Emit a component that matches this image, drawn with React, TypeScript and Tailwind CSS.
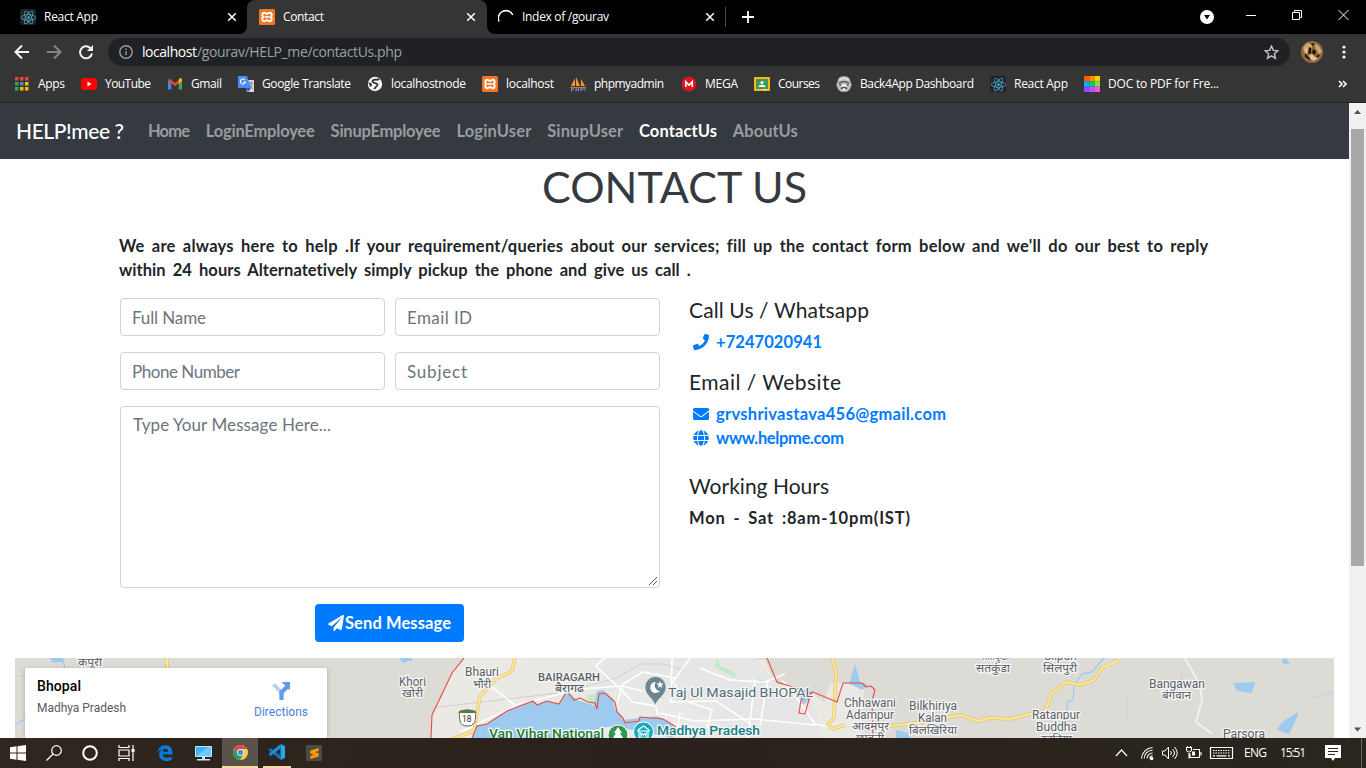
import React, { useLayoutEffect, useRef, useState } from "react";
import { FaEnvelope, FaGlobe, FaPaperPlane, FaPhone, FaReact } from "react-icons/fa";
import { SiSublimetext } from "react-icons/si";

type LabelProps = { w: number; children: string; className?: string };

/* One line of text whose tracking is computed so that it spans exactly `w` pixels. */
function Label({ w, children, className = "" }: LabelProps) {
  const ref = useRef<HTMLSpanElement>(null);
  const [tracking, setTracking] = useState(0);
  useLayoutEffect(() => {
    const el = ref.current;
    if (el) setTracking((w - el.getBoundingClientRect().width) / Math.max(1, children.length - 1));
  }, [w, children]);
  return (
    <span className={`block shrink-0 whitespace-pre ${className}`} style={{ width: w }}>
      <span ref={ref} style={{ letterSpacing: tracking }}>
        {children}
      </span>
    </span>
  );
}

const ReactIcon = () => (
  <span className="flex size-4 shrink-0 items-center justify-center rounded-[2px] bg-[#20232a]">
    <FaReact className="size-[15px] text-[#4fb3cb]" />
  </span>
);

const XamppIcon = () => (
  <svg viewBox="0 0 16 16" className="size-4 shrink-0">
    <rect width="16" height="16" rx="1.500" fill="#f37623" />
    <path
      d="M5.200 3.800C3 3.800 2.600 6.600 4.400 8 2.600 9.400 3 12.200 5.200 12.200c1.600 0 1.900-1.200 2.800-1.200s1.200 1.200 2.800 1.200c2.200 0 2.600-2.800.8-4.200 1.800-1.400 1.400-4.200-.8-4.200C9.200 3.800 8.900 5 8 5S6.800 3.800 5.200 3.800Z"
      fill="none"
      stroke="#fff"
      strokeWidth="2"
    />
    <path d="M6 8h4" stroke="#fff" strokeWidth="1.600" />
  </svg>
);

const CloseIcon = () => (
  <svg viewBox="0 0 10 10" className="size-[10px] shrink-0" stroke="#fff" strokeWidth="1.500">
    <path d="M1.200 1.200l7.600 7.600M8.800 1.200L1.200 8.800" />
  </svg>
);

function TabStrip() {
  return (
    <div className="flex h-[34px] bg-black">
      <div className="flex w-[247px] items-center pl-5">
        <ReactIcon />
        <Label w={54} className="ml-2">React App</Label>
        <span className="ml-[129px]"><CloseIcon /></span>
      </div>
      <div className="relative flex w-[240px] items-center rounded-t-lg bg-[#353535] pl-3">
        <svg viewBox="0 0 8 8" className="absolute bottom-0 -left-2 size-2"><path d="M8 0v8H0a8 8 0 0 0 8-8" fill="#353535" /></svg>
        <svg viewBox="0 0 8 8" className="absolute -right-2 bottom-0 size-2"><path d="M0 0v8h8a8 8 0 0 1-8-8" fill="#353535" /></svg>
        <XamppIcon />
        <Label w={41} className="ml-2">Contact</Label>
        <span className="ml-[142px]"><CloseIcon /></span>
      </div>
      <div className="flex w-[238px] items-center pl-[11px]">
        <svg viewBox="0 0 16 16" className="size-4 shrink-0" fill="none" stroke="#fff" strokeWidth="1.600">
          <path d="M1 12.500A7.200 7.200 0 0 1 14.800 6" />
        </svg>
        <Label w={87} className="ml-2">Index of /gourav</Label>
        <span className="ml-[96px]"><CloseIcon /></span>
      </div>
      <div className="mt-[7px] h-5 w-px bg-[#4d4d4d]" />
      <div className="flex flex-1 items-center pl-4">
        <svg viewBox="0 0 12 12" className="size-3" stroke="#fff" strokeWidth="1.800"><path d="M6 0v12M0 6h12" /></svg>
        <div className="flex-1" />
        <svg viewBox="0 0 14 14" className="size-[14px]"><circle cx="7" cy="7" r="7" fill="#fff" /><path d="M4 5h6L7 9.500z" fill="#000" /></svg>
        <svg viewBox="0 0 103 12" className="mr-[17px] mb-[5px] ml-[32px] h-3 w-[103px]" fill="none" stroke="#fff">
          <path d="M0 6.500h10M46.500 3.500h7v7h-7zM48.500 3.500v-2h7v7h-2M92.500 1l10 10M102.500 1l-10 10" />
        </svg>
      </div>
    </div>
  );
}

function Toolbar() {
  return (
    <div className="flex h-9 items-center bg-[#353535]">
      <svg viewBox="0 0 80 16" className="ml-[14px] h-4 w-20" fill="none" strokeWidth="2">
        <path d="M15 8H2M8 1.500L1.500 8 8 14.500" stroke="#f1f3f4" />
        <path d="M33 8h13M40 1.500L46.500 8 40 14.500" stroke="#858585" />
        <path d="M76.500 4.200A6 6 0 1 0 78 9.500" stroke="#f1f3f4" />
        <path d="M79 1v6h-6z" fill="#f1f3f4" />
      </svg>
      <div className="ml-[14px] flex h-7 w-[1182px] items-center rounded-full bg-[#202124] px-[11px]">
        <svg viewBox="0 0 14 14" className="size-[14px]" fill="none" stroke="#9aa0a6" strokeWidth="1.400"><circle cx="7" cy="7" r="6.200" /><path d="M7 6.200v4M7 3.500v1.400" /></svg>
        <Label w={55} className="ml-[9px] text-[14px] text-white">localhost</Label>
        <Label w={205} className="text-[14px] text-[#9aa0a6]">/gourav/HELP_me/contactUs.php</Label>
        <div className="flex-1" />
        <svg viewBox="0 0 14 14" className="size-[15px]" fill="none" stroke="#c4c7ca" strokeWidth="1.300"><path d="M7 1l1.700 4 4.300.4-3.300 2.800 1 4.300L7 10.200l-3.700 2.300 1-4.300L1 5.400 5.300 5z" /></svg>
      </div>
      <svg viewBox="0 0 22 22" className="ml-[11px] size-[22px]">
        <circle cx="11" cy="11" r="11" fill="#8f6a40" />
        <path d="M2 7l4-5 4 1 1 3-3 4-4 3zM13 2l5 3 3 6-3 2-3-5z" fill="#cfa871" />
        <path d="M8 6l2 1v6l-3-1zM12 8l3 2-1 4-3-2zM4 12l3 4 5 1-3 2-5-3zM10 2l4 1-2 2zM15 15l4-2-2 4z" fill="#20150c" />
        <path d="M8 14l3-1 3 3 3 1-4 3-4-2zM4 8l2-1 1 4-2 2z" fill="#e3c08d" />
      </svg>
      <svg viewBox="0 0 4 14" className="ml-[19px] h-[14px] w-1" fill="#f1f3f4"><circle cx="2" cy="2" r="1.600" /><circle cx="2" cy="7" r="1.600" /><circle cx="2" cy="12" r="1.600" /></svg>
    </div>
  );
}

const grid = ["#ea4335", "#ea4335", "#ea4335", "#34a853", "#4285f4", "#fbbc05", "#34a853", "#fbbc05", "#fbbc05"];
const rainbow = ["#ff5a00", "#ff8f00", "#ffd000", "#00b3ff", "#00d062", "#7ee04a", "#8a4dff", "#c44dff", "#ff4de8"];

const bookmarkIcons: Record<string, React.ReactNode> = {
  Apps: <>{grid.map((c, i) => <rect key={i} x={1 + (i % 3) * 5} y={1 + Math.floor(i / 3) * 5} width="3.500" height="3.500" fill={c} />)}</>,
  YouTube: <><rect y="2" width="16" height="12" rx="3" fill="#f00" /><path d="M6.500 5.500v5L10.500 8z" fill="#fff" /></>,
  Gmail: <><path d="M1 4v9.500h3.300V7z" fill="#4285f4" /><path d="M15 4v9.500h-3.300V7z" fill="#34a853" /><path d="M1 4.500L2.500 2.500 8 7l5.500-4.500L15 4.500 8 10.200z" fill="#ea4335" /><path d="M11.700 4v3.500L15 4.900V3.600a1.600 1.600 0 0 0-2.500-1.200z" fill="#fbbc04" /></>,
  "Google Translate": <><path d="M7 4h9v12H9z" fill="#d5d7da" /><path d="M0 0h9l4 12H1a1 1 0 0 1-1-1z" fill="#4b8bf5" /><path d="M8 12h5l-3 4z" fill="#2a56c6" /><path d="M7 4a2.500 2.500 0 1 0 .4 2H5.500" fill="none" stroke="#fff" strokeWidth="1.100" /><path d="M10.500 7h4M12.600 6v1M11.500 9l3 4M14.300 7c-.3 2-1.200 3-2.300 4" fill="none" stroke="#74787c" strokeWidth=".9" /></>,
  localhostnode: <><circle cx="8" cy="8" r="7.200" fill="#f4f4f4" /><path d="M11 4C8 3 5 4 5.500 5.800c.5 1.700 5.300 1 5 3.200-.1 1.500-2.500 1.800-3.300 4.300" fill="none" stroke="#303030" strokeWidth="1.700" /><path d="M1.500 6l3 1.500.5 2-2 1.500zM10 1.500l3 2-2 1z" fill="#303030" /></>,
  phpmyadmin: <><path d="M1 10L5 2v8zM6 10V1l4 9zM11 10V3l4 7z" fill="#f29a2e" /><path d="M0 11.500h16" stroke="#c9772a" /><path d="M1.500 15.500v-4h2v2h-2M6 11.500v4M6 13.500h2.500v-2m0 4v-4M11 15.500v-4h2v2h-2M15 12v3" stroke="#8588b5" fill="none" /></>,
  MEGA: <><circle cx="8" cy="8" r="7.300" fill="#e1141e" /><path d="M4.800 11V5.800L8 9l3.200-3.200V11" fill="none" stroke="#fff" strokeWidth="1.700" /></>,
  Courses: <><rect y="1" width="16" height="14" rx="1" fill="#f5b912" /><rect x="2" y="3" width="12" height="10" fill="#3f9a5b" /><circle cx="8" cy="6.500" r="1.600" fill="#fff" /><path d="M4.500 11c0-3 7-3 7 0z" fill="#fff" /><path d="M9 13h4v1H9z" fill="#eee" /></>,
  "Back4App Dashboard": <><path d="M8 .3c4 0 6 2 6.300 4.700L15.700 9l-2 4.500-2.700 2.200H5l-2.700-2.200L.3 9l1.400-4C2 2.300 4 .3 8 .3z" fill="#bdbdbd" /><path d="M4 4c2.500-2 5.500-2 8 0" fill="none" stroke="#eee" strokeWidth="1.200" /><path d="M3 7.500c2.500-2.500 7.500-2.500 10 0" fill="none" stroke="#4a4a4a" strokeWidth="1.300" /><path d="M3.500 9.500l2-1M12.500 9.500l-2-1M5 13c1.500-2.500 4.500-2.500 6 0" fill="none" stroke="#4a4a4a" strokeWidth="1.300" /><path d="M6 8.500h4l1 2H5zM6.500 13h3L8 15z" fill="#fff" /></>,
  "DOC to PDF for Fre...": <>{rainbow.map((c, i) => <rect key={i} x={(i % 3) * 5.34} y={Math.floor(i / 3) * 5.34} width="5.400" height="5.400" fill={c} />)}</>,
};

const bookmarks = [
  { name: "Apps", text: 27, cell: "w-[67px]" },
  { name: "YouTube", text: 46, cell: "w-[86px]" },
  { name: "Gmail", text: 31, cell: "w-[71px]" },
  { name: "Google Translate", text: 89, cell: "w-[129px]" },
  { name: "localhostnode", text: 75, cell: "w-[115px]" },
  { name: "localhost", text: 48, cell: "w-[88px]" },
  { name: "phpmyadmin", text: 70, cell: "w-[111px]" },
  { name: "MEGA", text: 33, cell: "w-[73px]" },
  { name: "Courses", text: 42, cell: "w-[82px]" },
  { name: "Back4App Dashboard", text: 114, cell: "w-[154px]" },
  { name: "React App", text: 54, cell: "w-[94px]" },
  { name: "DOC to PDF for Fre...", text: 111, cell: "w-[140px]" },
];

function Bookmarks() {
  return (
    <div className="flex h-[33px] items-center border-b border-[#202124] bg-[#353535] pb-1 pl-[14px]">
      {bookmarks.map((b) => (
        <div key={b.name} className={`flex shrink-0 items-center gap-2 ${b.cell}`}>
          {b.name === "React App" ? <ReactIcon /> : b.name === "localhost" ? <XamppIcon /> : (
            <svg viewBox="0 0 16 16" className="size-4 shrink-0">{bookmarkIcons[b.name]}</svg>
          )}
          <Label w={b.text}>{b.name}</Label>
        </div>
      ))}
      <svg viewBox="0 0 9 8" className="mr-[19px] ml-auto h-2 w-[9px]" fill="none" stroke="#fff" strokeWidth="1.600"><path d="M1 1l3 3-3 3M5 1l3 3-3 3" /></svg>
    </div>
  );
}

const links = [
  { name: "Home", w: 42 },
  { name: "LoginEmployee", w: 109 },
  { name: "SinupEmployee", w: 110 },
  { name: "LoginUser", w: 75 },
  { name: "SinupUser", w: 76 },
  { name: "ContactUs", w: 78 },
  { name: "AboutUs", w: 65 },
];

function Navbar() {
  return (
    <nav className="flex h-14 items-center bg-[#343a40] pl-4">
      <Label w={108} className="text-[21px] font-medium text-white">HELP!mee ?</Label>
      <div className="ml-6 flex gap-[15.800px] text-[16.500px] font-bold">
        {links.map((l) => (
          <Label key={l.name} w={l.w} className={l.name === "ContactUs" ? "text-white" : "text-[#999c9f]"}>{l.name}</Label>
        ))}
      </div>
    </nav>
  );
}

function Field({ text, w }: { text: string; w: number }) {
  return (
    <div className="flex h-[38px] w-[265px] items-center rounded border border-[#ced4da] pt-[2px] pl-[11px] text-[17px] text-[#6c757d]">
      <Label w={w}>{text}</Label>
    </div>
  );
}

function Contact() {
  return (
    <div className="px-[120px] text-[17px] leading-6 text-[#212529]">
      <h1 className="flex h-[75px] justify-center pt-[2px] text-[43px] leading-[52px] text-[#343a40]">
        <Label w={265}>CONTACT US</Label>
      </h1>
      <div className="-ml-px text-[16.500px] font-bold [word-spacing:3px]">
        <Label w={1089}>We are always here to help .If your requirement/queries about our services; fill up the contact form below and we'll do our best to reply</Label>
        <Label w={572}>within 24 hours Alternatetively simply pickup the phone and give us call .</Label>
      </div>
      <div className="mt-4 flex gap-[30px]">
        <div className="w-[540px]">
          <div className="grid grid-cols-2 gap-x-[10px] gap-y-4">
            <Field text="Full Name" w={74} />
            <Field text="Email ID" w={65} />
            <Field text="Phone Number" w={108} />
            <Field text="Subject" w={60} />
          </div>
          <div className="mt-4 flex h-[182px] justify-between rounded border border-[#ced4da] pt-[6px] pl-3 text-[#6c757d]">
            <Label w={198}>Type Your Message Here...</Label>
            <svg viewBox="0 0 10 10" className="mr-px mb-px size-[10px] self-end" stroke="#555"><path d="M1 9l8-8M5 9l4-4" /></svg>
          </div>
          <div className="mt-4 ml-[195px] flex h-[38px] w-[149px] items-center rounded bg-[#007bff] pl-[13px] text-[16.500px] font-bold text-white">
            <FaPaperPlane className="size-4 shrink-0" />
            <Label w={106} className="ml-px">Send Message</Label>
          </div>
        </div>
        <div className="-ml-px text-[16.500px] font-bold">
          <Label w={180} className="text-[21px] font-normal">Call Us / Whatsapp</Label>
          <div className="mt-2 flex items-center text-[#007bff]"><FaPhone className="mr-[7px] ml-1 size-4" /><Label w={106}>+7247020941</Label></div>
          <Label w={152} className="mt-4 text-[21px] font-normal">Email / Website</Label>
          <div className="mt-2 flex items-center text-[#007bff]"><FaEnvelope className="mr-[7px] ml-1 size-4" /><Label w={230}>grvshrivastava456@gmail.com</Label></div>
          <div className="flex items-center text-[#007bff]"><FaGlobe className="mr-[7px] ml-1 size-4" /><Label w={128}>www.helpme.com</Label></div>
          <Label w={140} className="mt-6 text-[21px] font-normal">Working Hours</Label>
          <Label w={221} className="mt-2 [word-spacing:3px]">Mon - Sat :8am-10pm(IST)</Label>
        </div>
      </div>
    </div>
  );
}

type Place = { t: string; x: number; y: number; w: number; s?: number; c?: string; b?: boolean };
const places: Place[] = [
  { t: "कपूरी", x: 78, y: 666, w: 24, s: 11 },
  { t: "Khori", x: 399, y: 686, w: 27 },
  { t: "खोरी", x: 402, y: 697, w: 21, s: 11 },
  { t: "Bhauri", x: 465, y: 676, w: 34 },
  { t: "भौरी", x: 473, y: 688, w: 18, s: 11 },
  { t: "BAIRAGARH", x: 538, y: 681, w: 62, s: 11, b: true },
  { t: "बैरागढ", x: 555, y: 692, w: 29, s: 11, b: true },
  { t: "Taj Ul Masajid BHOPAL", x: 668, y: 697, w: 145, s: 13.5, c: "#546e7a" },
  { t: "Van Vihar National", x: 489, y: 738, w: 115, s: 13.5, c: "#188038", b: true },
  { t: "Madhya Pradesh", x: 657, y: 735, w: 103, s: 13.5, c: "#12808a", b: true },
  { t: "Chhawani", x: 844, y: 707, w: 52 },
  { t: "Adampur", x: 846, y: 719, w: 48 },
  { t: "आदमपुर", x: 852, y: 730, w: 37, s: 11 },
  { t: "छावनी", x: 856, y: 742, w: 28, s: 11 },
  { t: "Bilkhiriya", x: 909, y: 710, w: 48 },
  { t: "Kalan", x: 918, y: 722, w: 29 },
  { t: "बिलखिरिया", x: 909, y: 734, w: 48, s: 11 },
  { t: "सातकुंडा", x: 981, y: 660, w: 28, s: 11 },
  { t: "सतकुंडा", x: 976, y: 672, w: 34, s: 11 },
  { t: "Silpuri", x: 1044, y: 660, w: 33 },
  { t: "सिलपुरी", x: 1043, y: 672, w: 34, s: 11 },
  { t: "Bangawan", x: 1149, y: 688, w: 56 },
  { t: "बंगवान", x: 1162, y: 699, w: 29, s: 11 },
  { t: "Ratanpur", x: 1032, y: 719, w: 48 },
  { t: "Buddha", x: 1036, y: 731, w: 41 },
  { t: "रतनिया", x: 1041, y: 743, w: 31, s: 11 },
  { t: "Parsora", x: 1223, y: 738, w: 42 },
];

function MapView() {
  return (
    <div className="relative mx-[15px] mt-4 h-20">
      <svg viewBox="15 658 1319 80" className="h-20 w-[1319px] font-['Roboto','Noto_Sans',sans-serif]" fill="none">
        <path d="M15 658h1319v80H15z" fill="#dcdbd6" />
        <path d="M464 658l-12 15-9 19-11 23-1 23h432l-1-31 3-20-3-4-9 2-4-2h-19l-6 19-20-14-29-4-10-24z" fill="#eae9e4" />
        <path d="M600 658h155l30 35 28 8 10 37H560l30-18 4-30z" fill="#e6e6e6" />
        <path d="M480 738c30-14 50-28 110-36l30-12 37-1 90 49z" fill="#e9e9e7" />
        <path d="M587 695l10-1-1 14-7-3zM718 658l2 8 14 6 3 6-12-5-11-7zM757 677l10 5-6 2zM802 688l6 4-5 1z" fill="#c1e8cb" />
        <path d="M431 708l85-10 50-6 50-14 25-14 22 0 22 6M15 676h10M1182 672v20M1127 700v20M1333 692l-22 6" stroke="#cdcfd1" />
        <g stroke="#fff" strokeWidth="1.600">
          <path d="M460 732l60-28 60-15 42-3 20 5M605 658l-9 8 26 25M617 704l6-20 20-12 32 6M672 658l-1 44 45-1 35 23M690 658l-17 24 15 20 25 8M755 680l-7 58M768 680l-8 45M782 680l18 22 15 22 20 4M660 713l35 8 60-2 60 6M488 684l28 22" />
          <path d="M622 690l10 12 24 4 3 16 40 6M680 712l-3 20M712 710l-5 18M700 668l30 12 35 2 20-8" />
          <path d="M1185 658l15 27 2 15-6 22 16 12" strokeOpacity=".7" />
        </g>
        <path d="M472 738l5-12 10-2 20-13 26-10 4 4 10-4 12 3 8-13 10 9 7 2 10 4 3-15 6-1 10 9 2 10 6 6 2 5 35-4 15 9v13l-60-12-60 12z" fill="#9ecaf0" />
        <path d="M855 664l5 18 9 3-7 5-8-4-5-2zM1233 683l22-1-3 11-15-2zM1298 712l-16 10-5 8 12 4 9-19zM1282 660l4-2 4 6h-7zM800 698l2-8 11 1-4 9-6 5zM50 658l3 5 12-1-2-4zM399 658l4 5 10-3-2-2zM896 730l12 3 2 5h-14z" fill="#9ecaf0" />
        <path d="M15 725l10-6M62 658l3 10M1104 658l-12 14-10 2-8 12-1 14-6 2v20" stroke="#9ecaf0" strokeWidth="1.300" />
        <g strokeLinejoin="round">
          <path d="M515 658l-3 13-16 8-16 17-6 35-22 8M832 658l4 12-2 47-6 8 5 4 12-4M890 726l40-5 30-6 18 6 12-3 20 1 20-5 15-2 6-18 15-12 14 3 14-5 8-12 17-8M167 658v12" stroke="#e5c76c" strokeWidth="3.500" />
          <path d="M515 658l-3 13-16 8-16 17-6 35-22 8M832 658l4 12-2 47-6 8 5 4 12-4M890 726l40-5 30-6 18 6 12-3 20 1 20-5 15-2 6-18 15-12 14 3 14-5 8-12 17-8M167 658v12" stroke="#ffe799" strokeWidth="2" />
        </g>
        <path d="M464 658l-12 15-9 19-11 23-1 23M472 738l5-12 10-2 20-13 10-4 16-6 4 4 10-4 12 3 8-13 7 9 6-2 8 4 7 1 2 6 2-15 6-1 10 9 2 10 6 6 2 5 14-2 1-4 23 2 12 7v7M767 658l10 24 25 8 9 3-3 10 -3 11-6-1 2-13 12-8 24 10 6-19h19l4 4 5-1 4 4-3 11 1 36" stroke="#e94b3f" strokeWidth="1.100" />
        <path d="M459 712q8-4 17 0l-1 10q-3 5-8 4-6 0-7-5z" fill="#fff" stroke="#666" />
        <path d="M459 711q8-3 17 0v2h-17z" fill="#528044" />
        <text x="462" y="722" fontSize="8.500" fill="#333">18</text>
        <path d="M655 706c-1-8-10-10-10-19a10.300 10.300 0 0 1 21 0c0 9-9 11-11 19z" fill="#6d858f" stroke="#fff" strokeWidth=".5" />
        <path d="M656 682a5.500 5.500 0 1 0 4 9 5.500 5.500 0 0 1-4-9zM660 681l1 2.500h2.500l-2 2 1 2.500-2.500-1.500-2 1.500.5-2.500-2-2h2.500z" fill="#fff" />
        <circle cx="618" cy="735" r="10" fill="#31984f" stroke="#fff" /><path d="M618 727l-4 6h2l-3 5h10l-3-5h2z" fill="#fff" />
        <circle cx="643.500" cy="732" r="10" fill="#13aebd" stroke="#fff" /><path d="M638 730l5.500-4 5.500 4v1h-11zM639 731v7h9v-7M641 737v-4l2.500 2 2.500-2v4" stroke="#fff" strokeWidth="1.200" />
        {places.map((p) => (
          <text key={p.t} x={p.x} y={p.y} textLength={p.w} lengthAdjust="spacingAndGlyphs" fontSize={p.s ?? 12} fontWeight={p.b ? 500 : 400} fill={p.c ?? "#5b5f6a"} stroke="#f5f5f3" strokeWidth="2.500" paintOrder="stroke">{p.t}</text>
        ))}
      </svg>
      <div className="absolute top-[10px] left-[10px] flex h-[70px] w-[302px] justify-between rounded-t-[2px] bg-white pr-[19px] pl-3 font-['Roboto',sans-serif] shadow-[0_1px_4px_rgba(0,0,0,0.25)]">
        <div className="pt-[9px]">
          <Label w={44} className="text-[14px] leading-[18px] font-medium text-black">Bhopal</Label>
          <Label w={89} className="mt-1 text-[12px] leading-[18px] text-[#5b5b5b]">Madhya Pradesh</Label>
        </div>
        <div className="flex flex-col items-center pt-[14px]">
          <svg viewBox="0 0 20 20" className="size-[19px]" fill="none"><path d="M1.500 2.500L10 11" stroke="#b4d0f5" strokeWidth="4" /><path d="M10 19v-8l6-6" stroke="#5f9be8" strokeWidth="4.500" /><path d="M10 0h9v9z" fill="#5f9be8" /></svg>
          <Label w={54} className="mt-[2px] text-[12px] leading-[18px] text-[#4c80d9]">Directions</Label>
        </div>
      </div>
    </div>
  );
}

function Scrollbar() {
  return (
    <div className="flex w-[17px] flex-col items-center bg-[#f1f1f1]">
      <svg viewBox="0 0 17 26" className="h-[26px] w-[17px]"><path d="M5 11h7L8.500 7z" fill="#505050" /></svg>
      <div className="h-[437px] w-[13px] bg-[#a8a8a8]" />
      <svg viewBox="0 0 17 17" className="mt-auto h-[17px] w-[17px]"><path d="M5 6.500h7l-3.500 4z" fill="#505050" /></svg>
    </div>
  );
}

function Taskbar() {
  return (
    <div className="flex h-[30px] items-center bg-linear-to-r from-[#2e261f] via-[#2b211c] to-[#29261e] text-white">
      <svg viewBox="0 0 16 16" className="ml-[10px] size-4" fill="#fff"><path d="M0 2.300L6.500 1.300v6.200H0zM7.500 1.200L16 0v7.500H7.500zM0 8.500h6.500v6.200L0 13.700zM7.500 8.500H16V16l-8.500-1.200z" /></svg>
      <svg viewBox="0 0 16 16" className="ml-5 size-4" fill="none" stroke="#fff" strokeWidth="1.200"><circle cx="10.500" cy="5.500" r="4.800" /><path d="M7 9l-6.500 6.500" /></svg>
      <svg viewBox="0 0 16 16" className="ml-5 size-4" fill="none" stroke="#fff" strokeWidth="2"><circle cx="8" cy="8" r="6.800" /></svg>
      <svg viewBox="0 0 17 16" className="ml-5 h-4 w-[17px]" fill="none" stroke="#fff" strokeWidth="1.200"><path d="M1 0v2.500h10V0M1 16v-2.500h10V16M1 5h10v6H1zM15 0v16" /><path d="M13.500 4h3v3h-3z" fill="#fff" stroke="none" /></svg>
      <svg viewBox="0 0 16 16" className="ml-[22px] size-4"><path d="M.5 7.500C1 3 4.200.2 8.300.2c4.500 0 7.200 3.200 7.200 7.300v2H5.600c.2 2.300 2.200 3.300 4.600 3.300 1.800 0 3.300-.5 4.500-1.200v3.200c-1.400.8-3.200 1.200-5.200 1.200-4.400 0-7.300-2.600-7.300-6.500 0-2.500 1.300-4.500 3.500-5.600C3.500 4.300 1.600 5.300.5 7.500zM5.700 6.700H11c0-1.900-.8-2.900-2.500-2.900-1.600 0-2.500 1.100-2.800 2.900z" fill="#0a7bdc" /></svg>
      <svg viewBox="0 0 17 16" className="ml-[22px] h-4 w-[17px]"><path d="M.5 1.500h16v10H.5z" fill="#39b3f5" stroke="#bde4fa" /><path d="M1 11L13 2h3v9z" fill="#6bcbfb" /><path d="M7 12h3v2H7zM2 14h13v1.500H2z" fill="#cfe8f6" /></svg>
      <div className="ml-[10px] flex h-[30px] w-9 items-center justify-center border-b-2 border-[#fbd9a5] bg-[#5b524c]">
        <svg viewBox="0 0 16 16" className="size-[15px]"><circle cx="8" cy="8" r="8" fill="#ffcd40" /><path d="M1.100 4A8 8 0 0 1 15 4.200H8L5 10z" fill="#dd4f43" /><path d="M1.100 4A8 8 0 0 0 7.500 16L11 10H5z" fill="#1ba160" /><circle cx="8" cy="8" r="3.700" fill="#fff" /><circle cx="8" cy="8" r="2.900" fill="#4c8bf5" /></svg>
      </div>
      <div className="ml-[5px] flex h-[30px] w-7 items-center justify-center border-b-2 border-[#fbd9a5]">
        <svg viewBox="0 0 16 16" className="size-4"><path d="M11.500 0L16 2v12l-4.500 2z" fill="#2aa4ea" /><path d="M0 5.200l1.500-1.200 10 7.600V16L0 6.500z" fill="#0a76bf" /><path d="M0 10.800L1.500 12l10-7.600V0L0 9.500z" fill="#1b8cd6" /></svg>
      </div>
      <div className="ml-[15px] flex size-4 items-center justify-center rounded-[1px] bg-[#4a4a4a]"><SiSublimetext className="size-[11px] text-[#ff9800]" /></div>
      <svg viewBox="0 0 126 20" className="ml-auto h-5 w-[126px]" fill="none" stroke="#fff" strokeWidth="1.200">
        <path d="M4 13l5.500-6 5.500 6" />
        <g transform="translate(28.500 3.500) scale(.93)"><path d="M1 13A13 13 0 0 1 13 1M4 13a9 9 0 0 1 9-9M7 13a6 6 0 0 1 6-6M10 13a3 3 0 0 1 3-3" strokeWidth="1.100" /><circle cx="12" cy="13" r="1.300" fill="#fff" /></g>
        <path d="M50.500 8h2.500l3.500-4v12l-3.500-4h-2.500zM58.500 8q2 2 0 4M60.500 6q4 4 0 8M62.500 4q5.500 6 0 12" strokeWidth="1" />
        <path d="M81 6.500h6.500v8H78v-4M89 9v3.500M74.500 4.500h5v3q-2.500 3-5 0zM75.500 4.500V3M78.500 4.500V3M77 10v5.500" strokeWidth="1.100" /><path d="M80 8.500h3v4h-3z" fill="#fff" stroke="none" />
        <path d="M98.500 4.500h22v11h-22z" /><path d="M101 7.500h17M101 10h17" strokeDasharray="1.500 1" /><path d="M101 12.800h2M104.500 12.800h10M116 12.800h2" />
      </svg>
      <Label w={23} className="ml-[6px] text-[12px]">ENG</Label>
      <Label w={26} className="ml-[13px] text-[12px]">15:51</Label>
      <svg viewBox="0 0 16 16" className="ml-[19px] size-4"><path d="M0 0h16v13h-6l-2 3-2-3H0z" fill="#fff" /><path d="M3 3.500h10M3 6.500h10M3 9.500h7" stroke="#29261e" /></svg>
      <div className="mr-1 ml-[20px] h-[30px] w-px bg-[#6b6660]" />
    </div>
  );
}

export default function App() {
  return (
    <div className="flex h-[768px] w-[1366px] flex-col overflow-hidden bg-white font-['Open_Sans',sans-serif] text-[12px] leading-4 text-white">
      <TabStrip />
      <Toolbar />
      <Bookmarks />
      <div className="flex h-[635px]">
        <main className="h-[635px] w-[1349px] overflow-hidden font-['Lato',sans-serif]">
          <Navbar />
          <Contact />
          <MapView />
        </main>
        <Scrollbar />
      </div>
      <Taskbar />
    </div>
  );
}
